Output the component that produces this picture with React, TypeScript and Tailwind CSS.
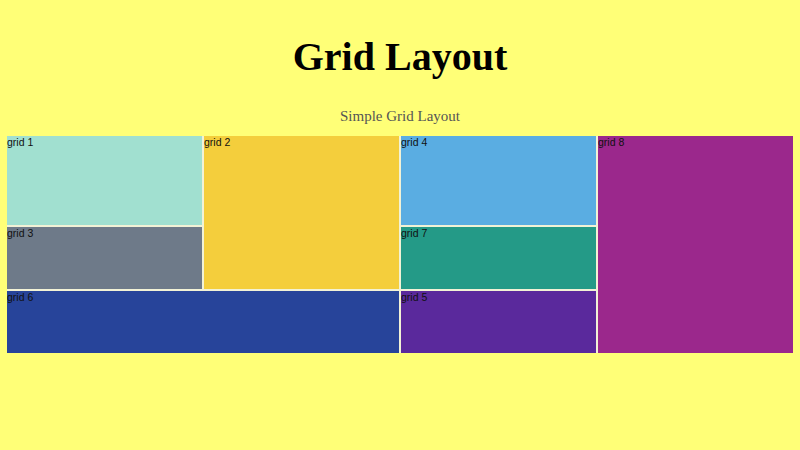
import React from "react";

const cells = [
  { label: "grid 1", area: "[grid-area:g1]", bg: "bg-[#a1e0d0]" },
  { label: "grid 2", area: "[grid-area:g2]", bg: "bg-[#f4ce3c]" },
  { label: "grid 3", area: "[grid-area:g3]", bg: "bg-[#6e7a89]" },
  { label: "grid 4", area: "[grid-area:g4]", bg: "bg-[#5aade2]" },
  { label: "grid 5", area: "[grid-area:g5]", bg: "bg-[#5a299c]" },
  { label: "grid 6", area: "[grid-area:g6]", bg: "bg-[#27449a]" },
  { label: "grid 7", area: "[grid-area:g7]", bg: "bg-[#249a87]" },
  { label: "grid 8", area: "[grid-area:g8]", bg: "bg-[#9b288c]" },
];

export default function App() {
  return (
    <div className="w-[800px] h-[450px] bg-[#ffff77] overflow-hidden flex flex-col items-center">
      <h1
        className="mt-[34px] h-[46px] leading-[46px] text-[40px] font-bold text-black"
        style={{ fontFamily: '"Liberation Serif", "Times New Roman", serif' }}
      >
        Grid Layout
      </h1>
      <p
        className="mt-[26px] h-[20px] leading-[20px] text-[15px] text-[#555555]"
        style={{ fontFamily: '"Liberation Serif", "Times New Roman", serif' }}
      >
        Simple Grid Layout
      </p>
      <div
        className="mt-[10px] w-[786px] h-[217px] grid grid-cols-4 grid-rows-[89px_62px_62px] gap-[2px] bg-[#f2f2d6] [grid-template-areas:'g1_g2_g4_g8'_'g3_g2_g7_g8'_'g6_g6_g5_g8']"
      >
        {cells.map((c) => (
          <div key={c.label} className={`${c.area} ${c.bg}`}>
            <span
              className="block text-[10.5px] leading-[12px] text-[#111111]"
              style={{ fontFamily: '"Liberation Sans", Arial, sans-serif' }}
            >
              {c.label}
            </span>
          </div>
        ))}
      </div>
    </div>
  );
}
